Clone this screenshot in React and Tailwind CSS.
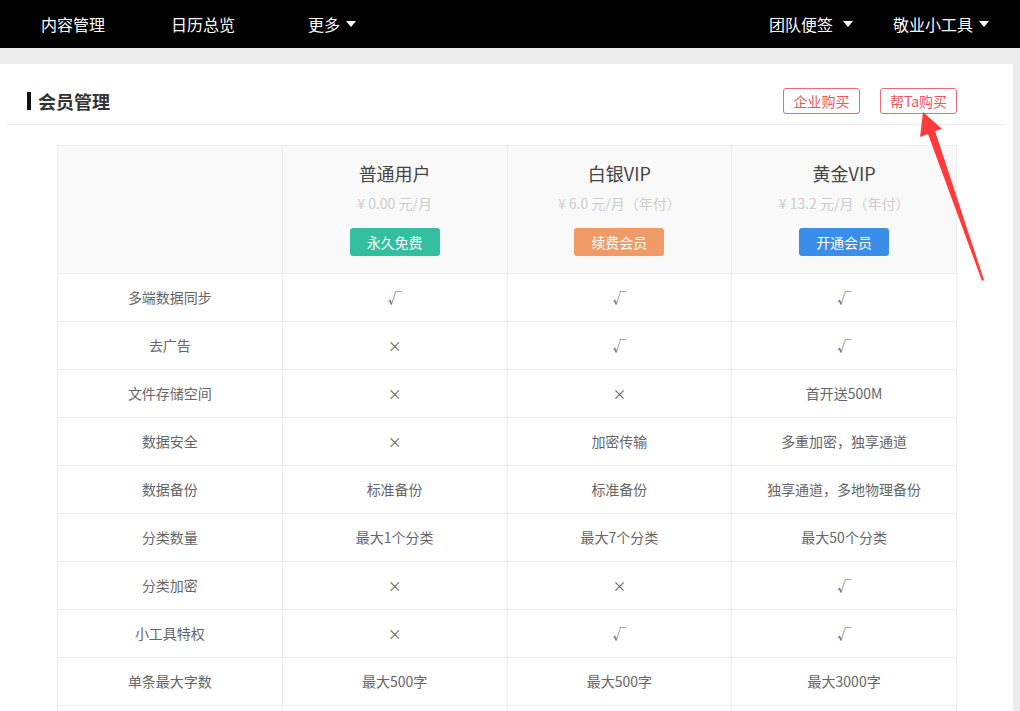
const FONT = { fontFamily: '"Microsoft YaHei", "Noto Sans CJK SC", "Noto Sans", sans-serif' };

const plans = [
  { name: "普通用户", price: "¥ 0.00 元/月", btn: "永久免费", color: "bg-[#33bea0]" },
  { name: "白银VIP", price: "¥ 6.0 元/月（年付）", btn: "续费会员", color: "bg-[#f09b67]" },
  { name: "黄金VIP", price: "¥ 13.2 元/月（年付）", btn: "开通会员", color: "bg-[#3a8ee9]" },
];

const rows = [
  ["多端数据同步", "√", "√", "√"],
  ["去广告", "×", "√", "√"],
  ["文件存储空间", "×", "×", "首开送500M"],
  ["数据安全", "×", "加密传输", "多重加密，独享通道"],
  ["数据备份", "标准备份", "标准备份", "独享通道，多地物理备份"],
  ["分类数量", "最大1个分类", "最大7个分类", "最大50个分类"],
  ["分类加密", "×", "×", "√"],
  ["小工具特权", "×", "√", "√"],
  ["单条最大字数", "最大500字", "最大500字", "最大3000字"],
  ["", "", "", ""],
];

function Caret() {
  return (
    <svg width="10" height="6" viewBox="0 0 10 6" className="ml-[6px]">
      <path d="M0 0h10L5 6z" fill="#fff" />
    </svg>
  );
}

export default function App() {
  return (
    <div className="relative min-h-[711px] bg-[#ebebeb]" style={FONT}>
      {/* top nav */}
      <div className="flex h-[48px] items-center bg-black text-[16px] text-white">
        <span className="ml-[41px]">内容管理</span>
        <span className="ml-[66px]">日历总览</span>
        <span className="ml-[73px] flex items-center">
          更多
          <Caret />
        </span>
        <span className="ml-auto flex items-center">
          团队便签
          <span className="ml-[4px]"><Caret /></span>
        </span>
        <span className="ml-[40px] mr-[31px] flex items-center">
          敬业小工具
          <Caret />
        </span>
      </div>

      <div className="pt-[16px]">
        <div className="w-[1013px] bg-white pb-[40px]">
          {/* header */}
          <div className="mx-[7px] flex items-center border-b border-[#eeeeee] pt-[24px] pb-[10px] pl-[20px] pr-[49px]">
            <div className="flex h-[26px] items-center">
              <span className="h-[18px] w-[4px] bg-[#111]" />
              <span className="ml-[7px] text-[18px] font-bold text-[#333]">会员管理</span>
            </div>
            <div className="ml-auto flex gap-[20px]">
              <button className="h-[26px] w-[77px] rounded-[3px] border border-[#ea6b70] text-[14px] text-[#e9575d]">
                企业购买
              </button>
              <button className="h-[26px] w-[77px] rounded-[3px] border border-[#ea6b70] text-[14px] text-[#e9575d]">
                帮Ta购买
              </button>
            </div>
          </div>

          {/* table */}
          <div className="ml-[57px] mt-[20px] w-[900px] border-l border-t border-[#ececec]">
            <div className="grid grid-cols-4 bg-[#f9f9f9]">
              <div className="h-[128px] border-b border-r border-[#ececec]" />
              {plans.map((p) => (
                <div
                  key={p.name}
                  className="flex h-[128px] flex-col items-center border-b border-r border-[#ececec] pt-[14px]"
                >
                  <div className="text-[18px] leading-[26px] text-[#444]">{p.name}</div>
                  <div className="mt-[7px] text-[14px] leading-[20px] text-[#cccccc]">{p.price}</div>
                  <button
                    className={`mt-[15px] h-[28px] w-[90px] rounded-[3px] text-[14px] text-white ${p.color}`}
                  >
                    {p.btn}
                  </button>
                </div>
              ))}
            </div>
            {rows.map((r, ri) => (
              <div key={ri} className="grid grid-cols-4">
                {r.map((c, i) => (
                  <div
                    key={i}
                    className="flex h-[48px] items-center justify-center border-b border-r border-[#ececec] text-[14px] text-[#666]"
                  >
                    {c}
                  </div>
                ))}
              </div>
            ))}
          </div>
        </div>
      </div>

      {/* annotation arrow */}
      <svg className="pointer-events-none absolute left-0 top-0" width="1020" height="711">
        <polygon
          points="923,112 942,129 935,131 984,280 982,281 928,134 920,137"
          fill="#ff3a3a"
        />
      </svg>
    </div>
  );
}
